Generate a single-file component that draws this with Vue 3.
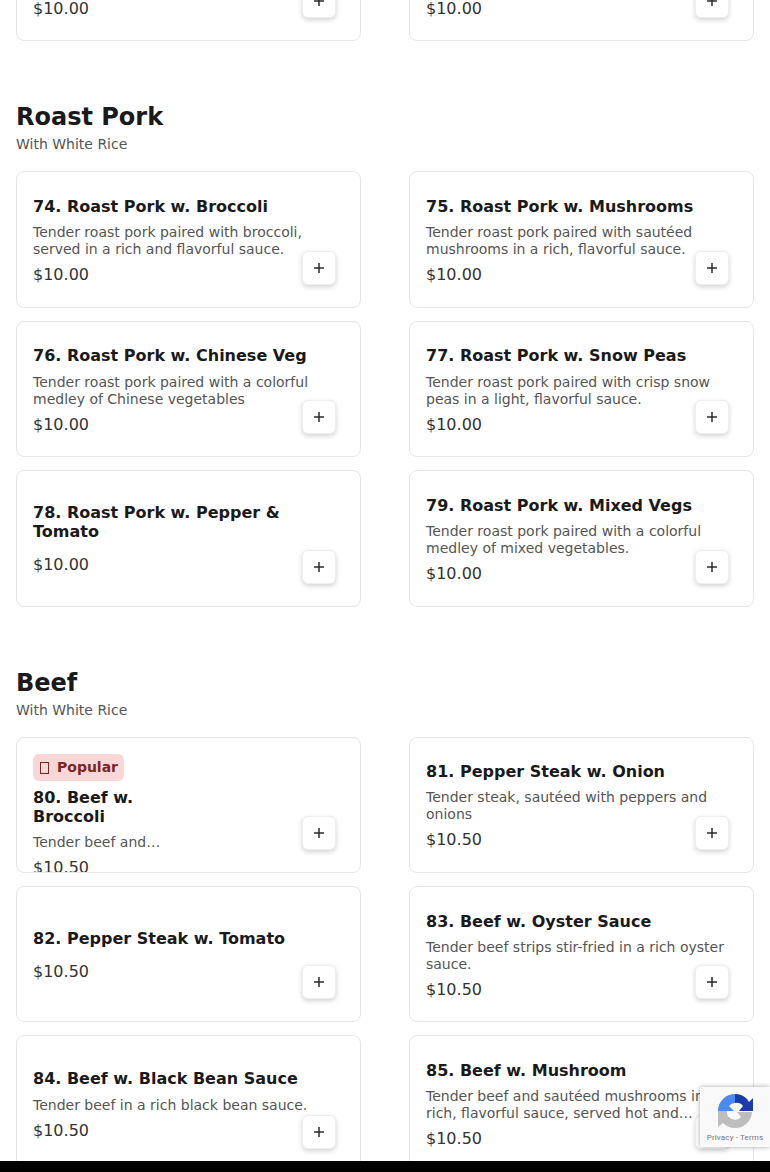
<script setup>
const sections = [
  {
    id: 'top',
    items: [
      { n: 'p1', price: '$10.00', partial: true },
      { n: 'p2', price: '$10.00', partial: true },
    ],
  },
  {
    id: 'pork',
    title: 'Roast Pork',
    sub: 'With White Rice',
    items: [
      { name: '74. Roast Pork w. Broccoli', desc: 'Tender roast pork paired with broccoli, served in a rich and flavorful sauce.', price: '$10.00' },
      { name: '75. Roast Pork w. Mushrooms', desc: 'Tender roast pork paired with sautéed mushrooms in a rich, flavorful sauce.', price: '$10.00' },
      { name: '76. Roast Pork w. Chinese Veg', desc: 'Tender roast pork paired with a colorful medley of Chinese vegetables', price: '$10.00' },
      { name: '77. Roast Pork w. Snow Peas', desc: 'Tender roast pork paired with crisp snow peas in a light, flavorful sauce.', price: '$10.00' },
      { name: '78. Roast Pork w. Pepper & Tomato', desc: '', price: '$10.00' },
      { name: '79. Roast Pork w. Mixed Vegs', desc: 'Tender roast pork paired with a colorful medley of mixed vegetables.', price: '$10.00' },
    ],
  },
  {
    id: 'beef',
    title: 'Beef',
    sub: 'With White Rice',
    items: [
      { name: '80. Beef w. Broccoli', desc: 'Tender beef and…', price: '$10.50', popular: true },
      { name: '81. Pepper Steak w. Onion', desc: 'Tender steak, sautéed with peppers and onions', price: '$10.50' },
      { name: '82. Pepper Steak w. Tomato', desc: '', price: '$10.50' },
      { name: '83. Beef w. Oyster Sauce', desc: 'Tender beef strips stir-fried in a rich oyster sauce.', price: '$10.50' },
      { name: '84. Beef w. Black Bean Sauce', desc: 'Tender beef in a rich black bean sauce.', price: '$10.50' },
      { name: '85. Beef w. Mushroom', desc: 'Tender beef and sautéed mushrooms in a rich, flavorful sauce, served hot and…', price: '$10.50' },
    ],
  },
]
</script>

<template>
  <div class="page">
    <div class="scroller">
      <section v-for="s in sections" :key="s.id" class="section">
        <header v-if="s.title" class="head">
          <h2>{{ s.title }}</h2>
          <p>{{ s.sub }}</p>
        </header>
        <div class="grid">
          <article v-for="item in s.items" :key="item.name || item.n" class="card">
            <div class="text" :class="{ narrow: item.popular, partial: item.partial, bare: !item.desc }">
              <span v-if="item.popular" class="badge"><span class="tofu"></span>Popular</span>
              <h3 v-if="item.name" class="name">{{ item.name }}</h3>
              <p v-if="item.name" class="desc">{{ item.desc }}</p>
              <span class="price">{{ item.price }}</span>
            </div>
            <button class="add" type="button" aria-label="Add">
              <svg width="12" height="12" viewBox="0 0 12 12"><path d="M6 1v10M1 6h10" stroke="#2b2b2b" stroke-width="1.5" fill="none"/></svg>
            </button>
          </article>
        </div>
      </section>
    </div>

    <aside class="captcha">
      <svg class="logo" width="38" height="38" viewBox="0 0 38 38">
        <path d="M19 2 V11 A8 8 0 0 0 13 14 L18 19 H2 A17 17 0 0 1 19 2Z" fill="#4a8af4"/>
        <path d="M19 2 A17 17 0 0 1 31 7 L33 10 L37 6 V19 H23 L27 14 A8 8 0 0 0 19 11Z" fill="#1c3aa9"/>
        <path d="M2 19 H11 A8 8 0 0 0 25 25 L21 20 H36 A17 17 0 0 1 19 36 A17 17 0 0 1 7 31 L2 35Z" fill="#bdbdbd"/>
      </svg>
      <span class="links">Privacy - Terms</span>
    </aside>
    <div class="bar"></div>
  </div>
</template>

<style>
html, body { margin: 0; padding: 0; background: #fff; }
</style>

<style scoped>
.page {
  position: relative;
  height: 1172px;
  overflow: hidden;
  background: #fff;
  font-family: "DejaVu Sans", sans-serif;
  color: #1a1a1a;
}
.scroller {
  margin-top: -95.2px;
  padding: 0 16px;
}
.section { margin-bottom: 60.5px; }
.head { padding-top: 0.6px; margin-bottom: 17px; }
.head h2 {
  margin: 0;
  font-size: 24px;
  line-height: 30px;
  font-weight: 700;
}
.head p {
  margin: 2px 0 0;
  font-size: 14px;
  line-height: 20px;
  color: #555;
}
.grid {
  display: grid;
  grid-template-columns: 345px 345px;
  column-gap: 48px;
  row-gap: 12.8px;
}
.card {
  position: relative;
  box-sizing: border-box;
  height: 136.5px;
  padding: 16px;
  border: 1px solid #e6e6e6;
  border-radius: 8px;
  background: #fff;
  overflow: hidden;
}
.text {
  box-sizing: border-box;
  height: 100%;
  padding-top: 4px;
  display: flex;
  flex-direction: column;
  align-items: flex-start;
  justify-content: safe center;
}
.text.bare { padding-top: 2px; }
.text.narrow { padding: 0 140px 0 0; }
.text.partial { justify-content: flex-end; padding-bottom: 5px; }
.badge {
  flex: none;
  display: inline-flex;
  align-items: center;
  height: 27px;
  padding: 0 6px 0 7px;
  margin-bottom: 7px;
  border-radius: 6px;
  background: #fad7d7;
  color: #7a2526;
  font-size: 14px;
  font-weight: 700;
}
.tofu {
  box-sizing: border-box;
  width: 9px;
  height: 12px;
  margin: 1px 8px 0 0;
  border: 1px solid #7a2526;
}
.name {
  flex: none;
  margin: -1px 0 8px;
  font-size: 16px;
  line-height: 19.2px;
  font-weight: 700;
  color: #1a1a1a;
}
.text.bare .name { margin: 0 0 7px; }
.text.narrow .name { margin: 0 0 8px; }
.desc {
  flex: none;
  margin: 0 0 7px;
  font-size: 14px;
  line-height: 17px;
  color: #555;
}
.price {
  flex: none;
  font-size: 16px;
  line-height: 20px;
  color: #333;
}
.add {
  position: absolute;
  right: 24px;
  bottom: 22px;
  width: 34px;
  height: 34px;
  padding: 0;
  display: flex;
  align-items: center;
  justify-content: center;
  border: 1px solid #eee;
  border-radius: 6px;
  background: #fff;
  box-shadow: 0 2px 5px rgba(0, 0, 0, 0.18);
}
.captcha {
  position: absolute;
  left: 700px;
  top: 1087px;
  width: 70px;
  height: 60px;
  background: #f9f9f9;
  box-shadow: 0 0 5px rgba(0, 0, 0, 0.35);
  border-radius: 2px 0 0 2px;
  display: flex;
  flex-direction: column;
  align-items: center;
}
.logo { margin-top: 5px; }
.links {
  font-family: Roboto, "Liberation Sans", sans-serif;
  font-size: 8px;
  line-height: 10px;
  letter-spacing: 0.15px;
  margin-top: 3px;
  color: #777;
  white-space: nowrap;
}
.bar {
  position: absolute;
  left: 0;
  right: 0;
  bottom: 0;
  height: 11px;
  background: #000;
}
</style>
